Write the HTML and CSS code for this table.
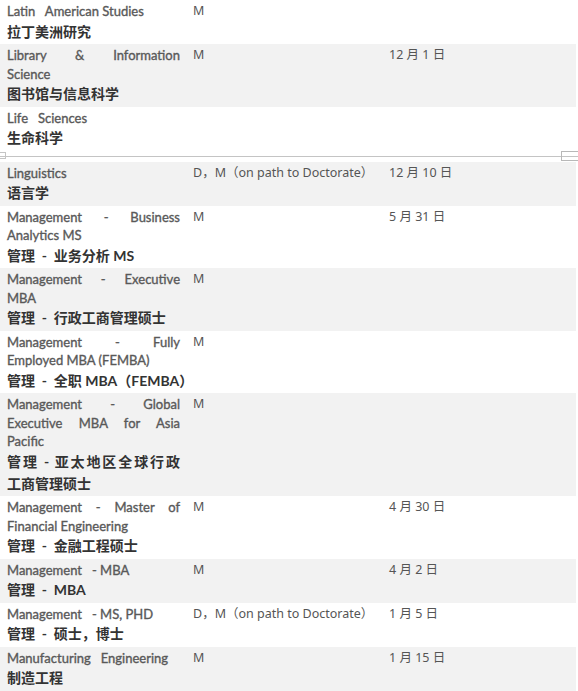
FILE: index.html
```html
<!DOCTYPE html>
<html lang="zh-CN">
<head>
<meta charset="utf-8">
<title>Programs</title>
<link rel="stylesheet" href="styles.css">
</head>
<body>
<div class="table">
  <div class="row">
    <div class="c1"><div class="en pre">Latin   American Studies</div><div class="zh">拉丁美洲研究</div></div>
    <div class="c2">M</div>
    <div class="c3"></div>
  </div>
  <div class="row alt">
    <div class="c1"><div class="en j">Library &amp; Information</div><div class="en">Science</div><div class="zh">图书馆与信息科学</div></div>
    <div class="c2">M</div>
    <div class="c3">12 月 1 日</div>
  </div>
  <div class="row">
    <div class="c1"><div class="en pre">Life   Sciences</div><div class="zh">生命科学</div></div>
    <div class="c2"></div>
    <div class="c3"></div>
  </div>
  <div class="pagebreak"><span class="mark-left"></span><span class="mark-right"></span></div>
  <div class="row alt">
    <div class="c1"><div class="en">Linguistics</div><div class="zh">语言学</div></div>
    <div class="c2">D，M（on path to Doctorate）</div>
    <div class="c3">12 月 10 日</div>
  </div>
  <div class="row">
    <div class="c1"><div class="en j">Management - Business</div><div class="en">Analytics MS</div><div class="zh pre">管理  -  业务分析 MS</div></div>
    <div class="c2">M</div>
    <div class="c3">5 月 31 日</div>
  </div>
  <div class="row alt">
    <div class="c1"><div class="en j">Management - Executive</div><div class="en">MBA</div><div class="zh pre">管理  -  行政工商管理硕士</div></div>
    <div class="c2">M</div>
    <div class="c3"></div>
  </div>
  <div class="row">
    <div class="c1"><div class="en j">Management - Fully</div><div class="en">Employed MBA (FEMBA)</div><div class="zh pre">管理  -  全职 MBA（FEMBA）</div></div>
    <div class="c2">M</div>
    <div class="c3"></div>
  </div>
  <div class="row alt">
    <div class="c1"><div class="en j">Management - Global</div><div class="en j">Executive MBA for Asia</div><div class="en">Pacific</div><div class="zh j">管理 - 亚太地区全球行政</div><div class="zh">工商管理硕士</div></div>
    <div class="c2">M</div>
    <div class="c3"></div>
  </div>
  <div class="row">
    <div class="c1"><div class="en j">Management - Master of</div><div class="en">Financial Engineering</div><div class="zh pre">管理  -  金融工程硕士</div></div>
    <div class="c2">M</div>
    <div class="c3">4 月 30 日</div>
  </div>
  <div class="row alt">
    <div class="c1"><div class="en pre">Management   - MBA</div><div class="zh pre">管理  -  MBA</div></div>
    <div class="c2">M</div>
    <div class="c3">4 月 2 日</div>
  </div>
  <div class="row">
    <div class="c1"><div class="en pre">Management   - MS, PHD</div><div class="zh pre">管理  -  硕士，博士</div></div>
    <div class="c2">D，M（on path to Doctorate）</div>
    <div class="c3">1 月 5 日</div>
  </div>
  <div class="row alt">
    <div class="c1"><div class="en pre">Manufacturing   Engineering</div><div class="zh">制造工程</div></div>
    <div class="c2">M</div>
    <div class="c3">1 月 15 日</div>
  </div>
</div>
</body>
</html>
```
FILE: styles.css
```css
html, body {
  margin: 0;
  padding: 0;
  background: #ffffff;
  overflow: hidden;
}
.table {
  width: 576px;
  display: flex;
  flex-direction: column;
}
.row {
  display: grid;
  grid-template-columns: 186px 196px 194px;
  padding: 2px 0 1.5px 0;
  background: #ffffff;
}
.row.alt {
  background: #f2f2f2;
}
.c1 {
  padding: 0 6px 0 7px;
}
.c2, .c3 {
  padding-left: 7px;
  font-family: "Noto Sans", "Noto Sans CJK SC", sans-serif;
  font-size: 12.5px;
  line-height: 18.5px;
  color: #555555;
  white-space: nowrap;
}
.en {
  font-family: Lato, "Noto Sans CJK SC", sans-serif;
  font-size: 13px;
  line-height: 18.5px;
  color: #595959;
  font-weight: 400;
  -webkit-text-stroke: 0.35px #595959;
  white-space: nowrap;
}
.zh {
  font-family: Lato, "Noto Sans CJK SC", sans-serif;
  font-size: 14px;
  line-height: 22px;
  color: #333333;
  font-weight: 700;
  white-space: nowrap;
}
.pre {
  white-space: pre;
}
.j {
  text-align: justify;
  text-align-last: justify;
  white-space: normal;
}
.pagebreak {
  position: relative;
  height: 11px;
  width: 578px;
}
.pagebreak::before {
  content: "";
  display: block;
  position: absolute;
  left: 0;
  right: 0;
  top: 5px;
  height: 1px;
  background: #c4c4c4;
}
.mark-left {
  position: absolute;
  left: 0;
  top: 1px;
  width: 5px;
  height: 5px;
  border: 1px solid #c4c4c4;
  border-left: none;
}
.mark-right {
  position: absolute;
  left: 561px;
  top: 0;
  width: 17px;
  height: 8px;
  border: 1px solid #b8b8b8;
  border-right: none;
}
```
